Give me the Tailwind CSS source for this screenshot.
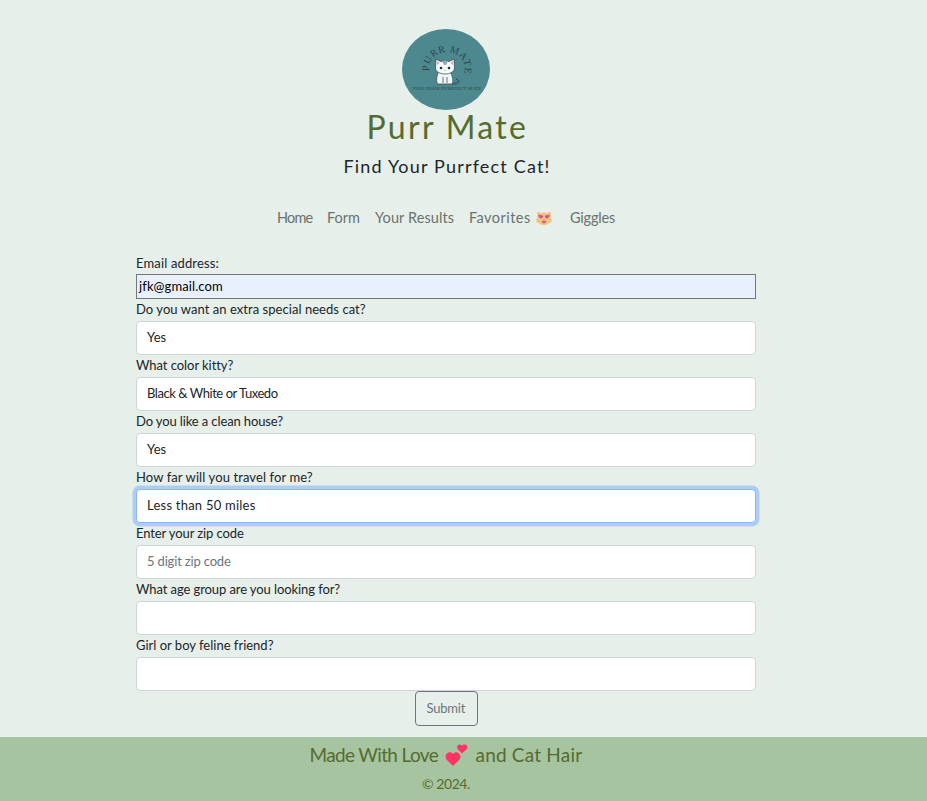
<!DOCTYPE html>
<html lang="en">
<head>
<meta charset="utf-8">
<title>Purr Mate</title>
<script src="https://cdn.jsdelivr.net/npm/@tailwindcss/browser@4"></script>
</head>
<body class="bg-[#e6efe9] font-[Lato,sans-serif] text-[13px] leading-[22px] text-[#212529]">
<div class="flex h-[801px] flex-col">
  <div class="flex w-[892px] grow flex-col items-center">
    <header class="flex flex-col items-center pt-[29px]">
      <svg class="h-[81px] w-[88px]" viewBox="0 0 88 81">
        <ellipse cx="44" cy="40.500" rx="44" ry="40.500" fill="#4d888f"/>
        <path id="arc" d="M27.500 42 C24 17 66 17 62.500 42" fill="none"/>
        <text font-family="Liberation Serif, serif" font-size="10" fill="#2b474c"><textPath href="#arc" textLength="61">PURR MATE</textPath></text>
        <g stroke="#28434e" stroke-width=".7" stroke-linejoin="round">
          <path d="M49 54 C56 55 58 52 54 50 C59 51 58 56 50 55" fill="#6f9bad"/>
          <path d="M37 42 C34 47 34 54 36 55 H50 C52 52 50 46 48 42Z" fill="#f2f5f6"/>
          <path d="M34 30 L38.500 32.500 Q43 31 47 32.500 L52 30 L52.500 39 C52 47 34 47 33.500 39Z" fill="#f6f8f9"/>
          <path d="M41 48V54M45 48V54" fill="none"/>
        </g>
        <path d="M35 32L37.500 34L35 36M51 32L48.500 34L51 36" fill="#dda99e"/>
        <path d="M40 32Q43 31 46 32L44 36H42Z" fill="#8fa9ba"/>
        <circle cx="39" cy="39" r="1.300" fill="#18333c"/><circle cx="47" cy="39" r="1.300" fill="#18333c"/>
        <path d="M42 41h2l-1 1z" fill="#c98b3c"/>
        <text x="10.500" y="60.500" textLength="69" font-family="Liberation Serif, serif" font-size="5" fill="#2b474c">FIND YOUR PURRFECT MATE</text>
      </svg>
      <h1 class="flex h-[38px] w-[159px] items-center whitespace-nowrap pb-[4px] text-[32px] tracking-[2.300px] text-[#556b2f]">Purr Mate</h1>
      <p class="mt-[8px] flex h-[22px] w-[205px] items-center whitespace-nowrap pb-[2px] text-[18px] tracking-[1.180px]">Find Your Purrfect Cat!</p>
    </header>
    <nav class="mt-[29px] flex h-[22px] w-[338px] items-center whitespace-nowrap text-[14.500px] text-[#6a736f]">
      <a class="w-[50px] tracking-[-0.800px]">Home</a>
      <a class="w-[48px]">Form</a>
      <a class="w-[94px] tracking-[0.100px]">Your Results</a>
      <a class="flex w-[101px] items-center"><span class="w-[67px] tracking-[0.450px]">Favorites</span>
        <svg class="size-[16px]" viewBox="0 0 16 16"><path d="M1.500 1.500L4.500 3Q8 2 11.500 3L14.500 1.500L15 9C15 13 12 15 8 15S1 13 1 9Z" fill="#f5c77c"/><path d="M2.500 3l1.500 1-1 1.500M13.500 3L12 4l1 1.500" fill="#e89b70"/><path d="M5 9L2.500 6.500C1.500 5 4 4 5 5.500 6 4 8 5.500 7 7ZM11 9L9 7C8 5.500 10 4 11 5.500 12 4 14.500 5 13.500 6.500Z" fill="#d2588a"/><path d="M5.500 11Q8 10.500 10.500 11Q10 13.500 8 13.500T5.500 11M7 9.500h2l-1 1z" fill="#c7678c"/><path d="M0 9.500l2.500.5M0 12l2.500-.5M16 9.500l-2.500.5M16 12l-2.500-.5" stroke="#d99b69" stroke-width=".6"/></svg></a>
      <a class="tracking-[-0.200px]">Giggles</a>
    </nav>
    <form class="mt-[23px] flex w-[620px] flex-col whitespace-nowrap">
      <label class="h-[22px] tracking-[0.150px]">Email address:</label>
      <div class="flex h-[25px] items-center border border-[#767676] bg-[#e8f0fe] px-[2px] pb-[2px] tracking-[0.100px] text-black">jfk@gmail.com</div>
      <label class="h-[22px] leading-[20px] tracking-[0.050px]">Do you want an extra special needs cat?</label>
      <div class="flex h-[34px] items-center rounded-[4px] border border-[#ced4da] bg-white px-[10px] pb-[2px]">Yes</div>
      <label class="h-[22px] leading-[20px] tracking-[-0.060px]">What color kitty?</label>
      <div class="flex h-[34px] items-center rounded-[4px] border border-[#ced4da] bg-white px-[10px] pb-[2px] tracking-[-0.450px]">Black &amp; White or Tuxedo</div>
      <label class="h-[22px] leading-[20px] tracking-[-0.120px]">Do you like a clean house?</label>
      <div class="flex h-[34px] items-center rounded-[4px] border border-[#ced4da] bg-white px-[10px] pb-[2px]">Yes</div>
      <label class="h-[22px] leading-[20px] tracking-[0.100px]">How far will you travel for me?</label>
      <div class="flex h-[34px] items-center rounded-[4px] border border-[#86b7fe] bg-white px-[10px] pb-[2px] tracking-[0.230px] shadow-[0_0_0_3.500px_#adcef0]">Less than 50 miles</div>
      <label class="h-[22px] leading-[20px] tracking-[-0.100px]">Enter your zip code</label>
      <div class="flex h-[34px] items-center rounded-[4px] border border-[#ced4da] bg-white px-[10px] pb-[2px] tracking-[-0.170px] text-[#6c757d]">5 digit zip code</div>
      <label class="h-[22px] leading-[20px] tracking-[-0.090px]">What age group are you looking for?</label>
      <div class="h-[34px] rounded-[4px] border border-[#ced4da] bg-white"></div>
      <label class="h-[22px] leading-[20px]">Girl or boy feline friend?</label>
      <div class="h-[34px] rounded-[4px] border border-[#ced4da] bg-white"></div>
      <button type="button" class="flex h-[35px] w-[63px] items-center self-center rounded-[4px] border border-[#6c757d] px-[11px] pb-[2px] tracking-[-0.200px] text-[#6c757d]">Submit</button>
    </form>
  </div>
  <footer class="h-[64px] bg-[#a6c4a0] text-[#556b2f]">
    <div class="flex w-[892px] flex-col items-center whitespace-nowrap">
      <div class="flex h-[36px] w-[273px] items-center text-[19px]"><span class="w-[135px] tracking-[-0.650px]">Made With Love</span>
        <svg class="mr-[8px] h-[23px] w-[23px]" viewBox="0 0 23 23"><path d="M8 22L1.500 15.500C-2 10.500 5 5.500 8 10C11 5.500 18 10.500 14.500 15.500Z" fill="#ff3366"/><path d="M17 9.500L12.800 5.300C10.500 1 15-1 17 2C19-1 24.500 1 21.500 5.300Z" fill="#ff3366"/></svg>
        <span class="tracking-[0.200px]">and Cat Hair</span></div>
      <div class="flex h-[22px] w-[48px] items-center text-[14px] tracking-[-0.450px]">© 2024.</div>
    </div>
  </footer>
</div>
</body>
</html>
